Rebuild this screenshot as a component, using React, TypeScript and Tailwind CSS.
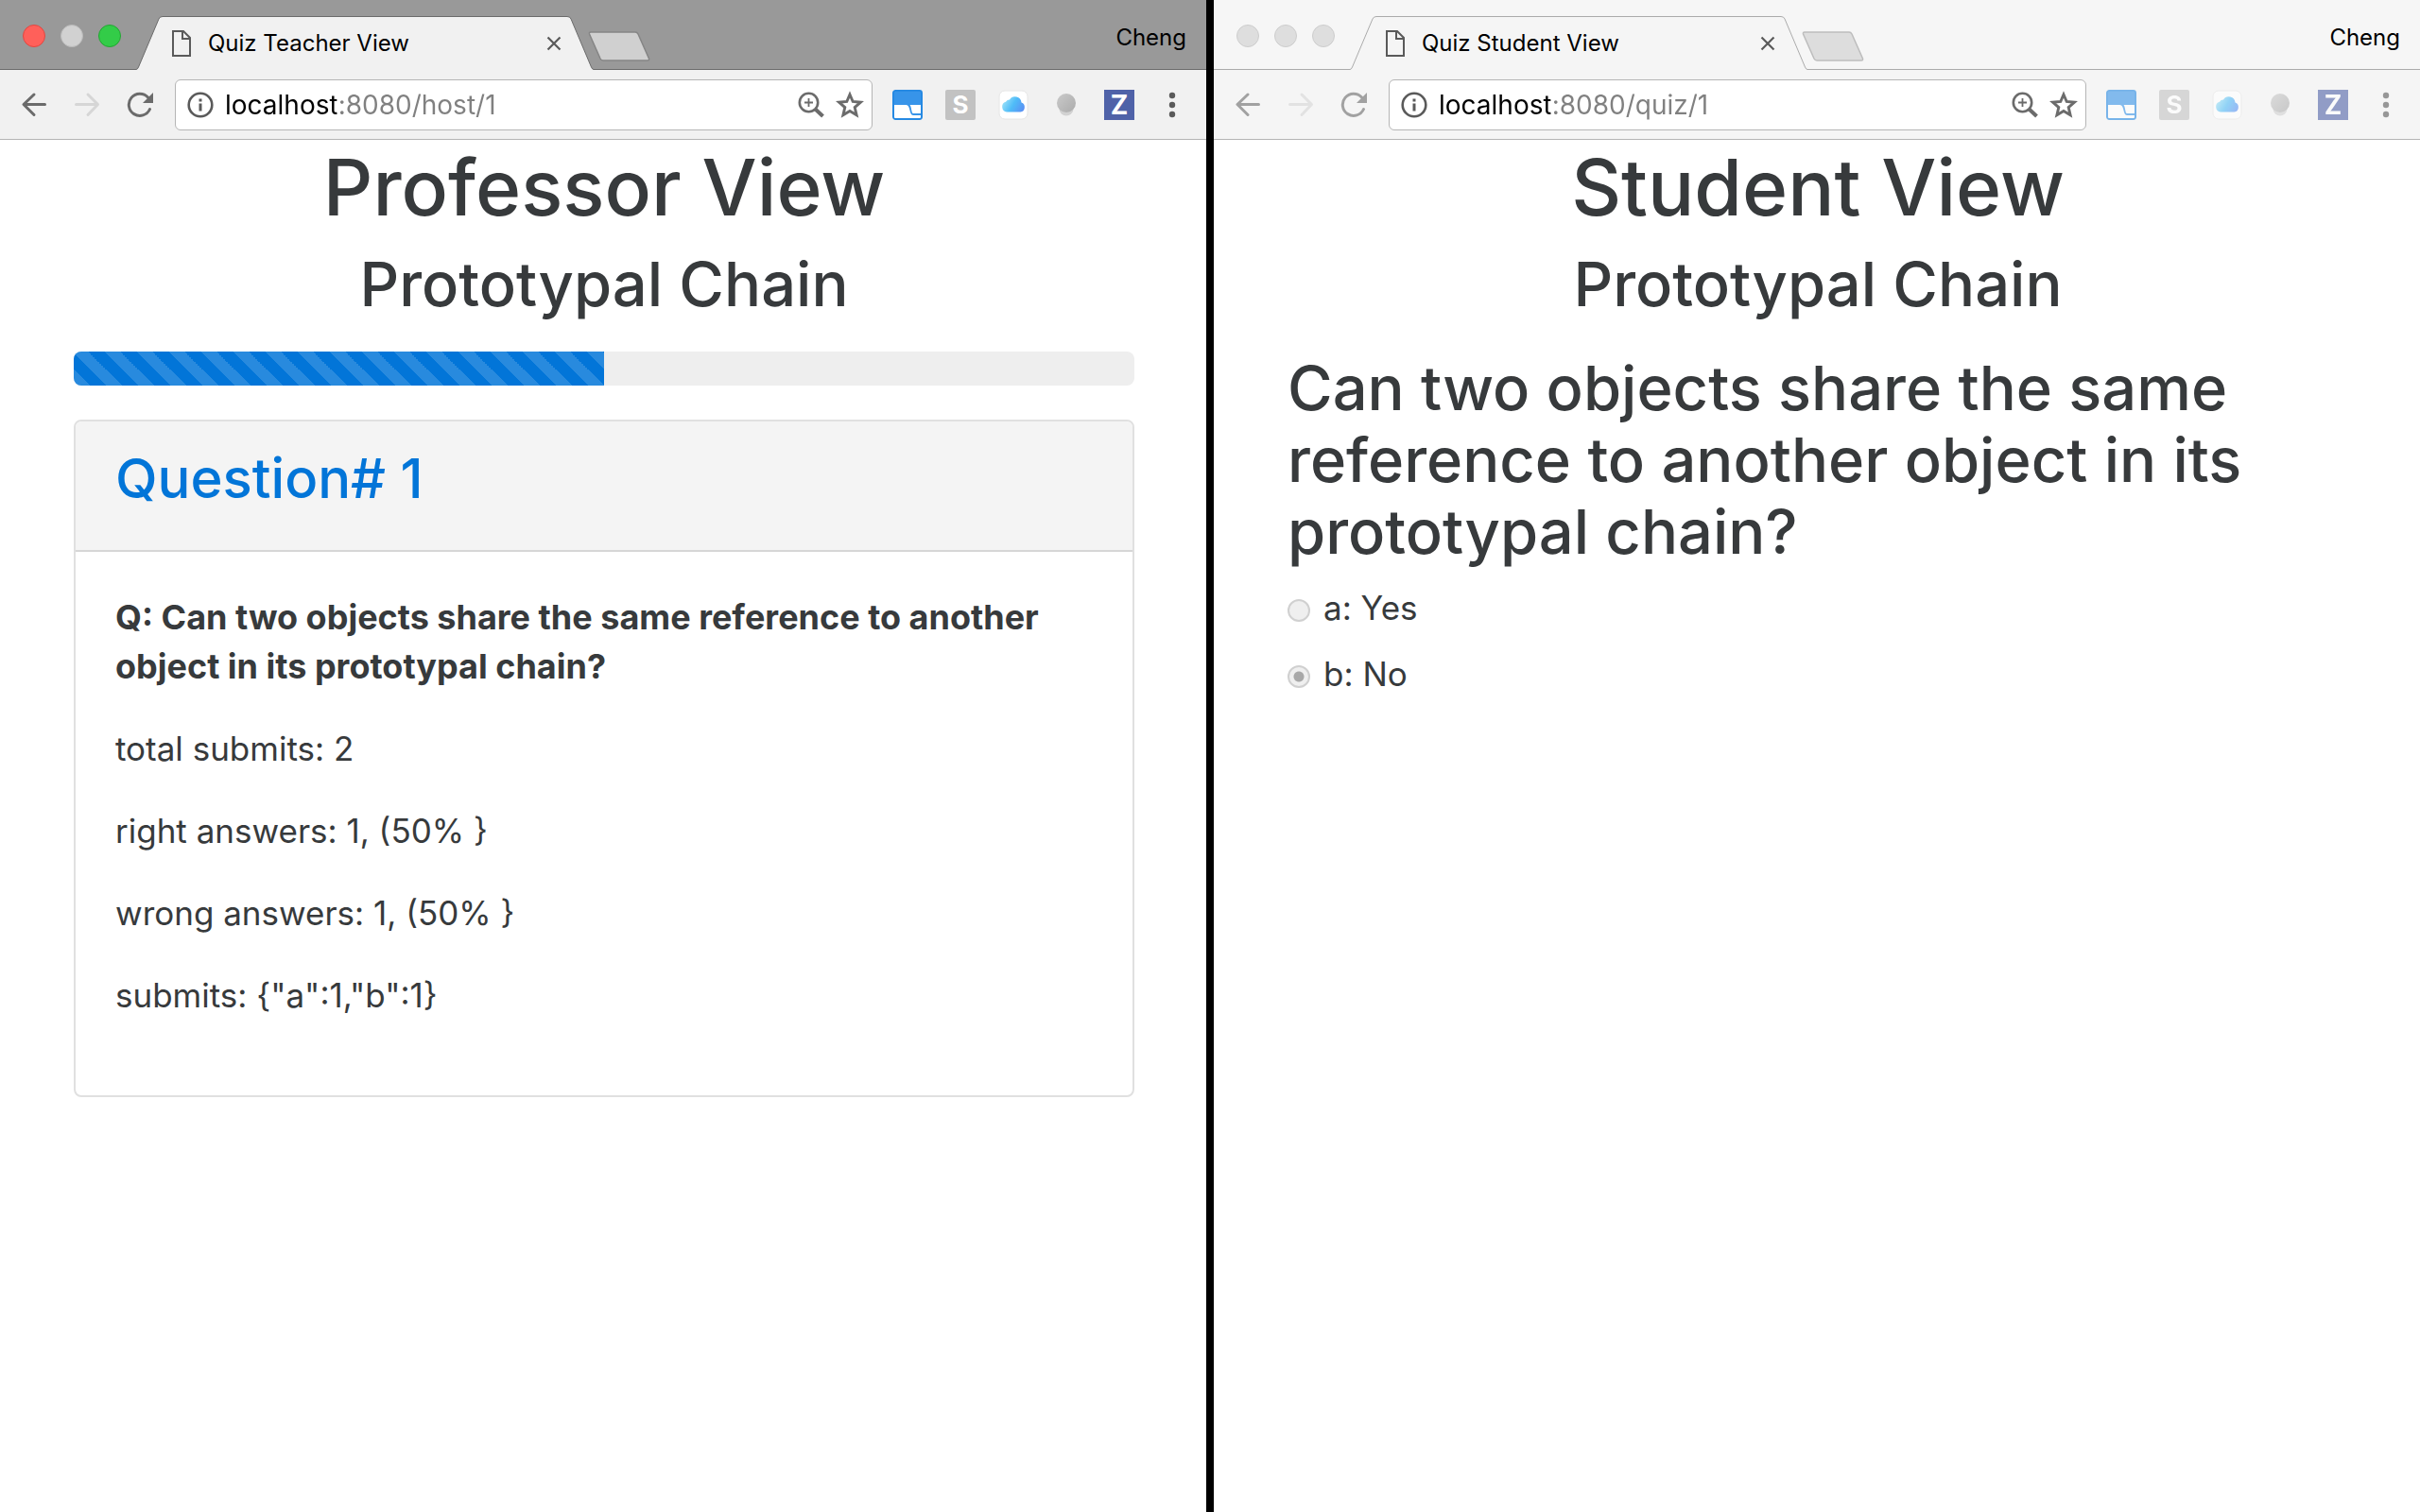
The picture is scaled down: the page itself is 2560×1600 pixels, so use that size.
import { ReactNode } from "react";

type Theme = {
  strip: string;
  toolbar: string;
  faded: string;
  tabFill: string;
  tabStroke: string;
  newTabFill: string;
  newTabStroke: string;
  lights: string[];
};

const activeTheme: Theme = {
  strip: "bg-[#999999] border-[#6b6b6b]",
  toolbar: "bg-[#f1f1f1]",
  faded: "opacity-100",
  tabFill: "#f1f1f1",
  tabStroke: "#6b6b6b",
  newTabFill: "#d0d0d0",
  newTabStroke: "#858585",
  lights: [
    "bg-[#ff605a] border-[#e14640]",
    "bg-[#d1d1d1] border-[#bababa]",
    "bg-[#33cc48] border-[#24a533]",
  ],
};

const inactiveTheme: Theme = {
  strip: "bg-[#f6f6f6] border-[#ababab]",
  toolbar: "bg-[#f5f5f5]",
  faded: "opacity-60",
  tabFill: "#f5f5f5",
  tabStroke: "#ababab",
  newTabFill: "#dddddd",
  newTabStroke: "#bdbdbd",
  lights: [
    "bg-[#dedede] border-[#cdcdcd]",
    "bg-[#dedede] border-[#cdcdcd]",
    "bg-[#dedede] border-[#cdcdcd]",
  ],
};

function DocumentIcon() {
  return (
    <svg className="size-7 shrink-0" viewBox="0 0 28 28" fill="none" stroke="#5a5a5a" strokeWidth="2" aria-hidden="true">
      <path d="M5 1H16L23 8V27H5Z" />
      <path d="M15 1V9H23" />
    </svg>
  );
}

function BackIcon() {
  return (
    <svg className="size-7" viewBox="0 0 28 28" fill="none" stroke="#6b6b6b" strokeWidth="3" strokeLinecap="round" strokeLinejoin="round" aria-hidden="true">
      <path d="M25.500 13.500H3.500M14 3L3 13.500L14 24.500" />
    </svg>
  );
}

function ForwardIcon() {
  return (
    <svg className="size-7" viewBox="0 0 28 28" fill="none" stroke="#d6d6d6" strokeWidth="3" strokeLinecap="round" strokeLinejoin="round" aria-hidden="true">
      <path d="M2.500 13.500H24.500M15 3L25.500 13.500L15 24.500" />
    </svg>
  );
}

function ReloadIcon() {
  return (
    <svg className="size-7" viewBox="0 0 28 28" aria-hidden="true">
      <path d="M24.500 18.500A11.600 11.600 0 1 1 22.500 6" fill="none" stroke="#6b6b6b" strokeWidth="3" strokeLinecap="round" />
      <path d="M28 1V12H17Z" fill="#6b6b6b" />
    </svg>
  );
}

function InfoIcon() {
  return (
    <svg className="size-7 shrink-0" viewBox="0 0 28 28" aria-hidden="true">
      <circle cx="14" cy="14" r="12.300" fill="none" stroke="#5a5a5a" strokeWidth="2.600" />
      <path d="M12.500 7.500H15.500V10.500H12.500ZM12.500 12.500H15.500V20.500H12.500Z" fill="#5a5a5a" />
    </svg>
  );
}

function ZoomInIcon() {
  return (
    <svg className="size-7" viewBox="0 0 28 28" fill="none" stroke="#6b6b6b" aria-hidden="true">
      <circle cx="11.500" cy="11.500" r="9.700" strokeWidth="2.600" />
      <path d="M11.500 7V16M7 11.500H16" strokeWidth="1.800" />
      <path d="M18.500 18.500L26.500 26" strokeWidth="4" />
    </svg>
  );
}

function StarIcon() {
  return (
    <svg className="h-8 w-[30px]" viewBox="0 0 30 32" fill="none" stroke="#6b6b6b" strokeWidth="2.900" aria-hidden="true">
      <path d="M15 5L18.200 12.500L26.500 13.200L20.200 18.600L22.100 26.800L15 22.400L7.900 26.800L9.800 18.600L3.500 13.200L11.800 12.500Z" />
    </svg>
  );
}

function TabCurveIcon() {
  return (
    <svg className="size-8" viewBox="0 0 32 32" aria-hidden="true">
      <rect x="0.900" y="0.900" width="30.200" height="30.200" rx="2.500" fill="#3794e9" stroke="#2488e2" strokeWidth="1.800" />
      <path d="M2 16H14.500C19.500 16 17.500 27 22 27H30V29Q30 30 29 30H3Q2 30 2 29Z" fill="#ffffff" />
      <path d="M18.500 16H30V25H22C20 25 20.500 18.500 18.500 16Z" fill="#ffffff" />
    </svg>
  );
}

function CloudIcon({ id }: { id: string }) {
  return (
    <svg className="size-8" viewBox="0 0 32 32" aria-hidden="true">
      <defs>
        <linearGradient id={id} x1="0" y1="0.300" x2="1" y2="0.700">
          <stop offset="0" stopColor="#9fe3f8" />
          <stop offset="0.500" stopColor="#4fbcf8" />
          <stop offset="1" stopColor="#5a92f4" />
        </linearGradient>
      </defs>
      <rect x="1" y="1" width="30" height="30" rx="6" fill="#ffffff" stroke="#e6e6e6" />
      <path d="M9 23.500A5.500 5.500 0 0 1 8 12.800A4.500 4.500 0 0 1 12 10.500A6.800 6.800 0 0 1 24.500 13.500A5.200 5.200 0 0 1 23.500 23.500Z" fill={`url(#${id})`} />
    </svg>
  );
}

function BulbIcon({ id }: { id: string }) {
  return (
    <svg className="size-8" viewBox="0 0 32 32" aria-hidden="true">
      <defs>
        <linearGradient id={id} x1="0" y1="0" x2="1" y2="1">
          <stop offset="0" stopColor="#cacaca" />
          <stop offset="1" stopColor="#ababab" />
        </linearGradient>
      </defs>
      <circle cx="16" cy="20" r="7.500" fill="#d2d2d2" />
      <circle cx="16" cy="14" r="10" fill={`url(#${id})`} />
    </svg>
  );
}

function MenuIcon() {
  return (
    <svg className="h-8 w-2" viewBox="0 0 8 32" fill="#5a5a5a" aria-hidden="true">
      <circle cx="4" cy="6" r="3.200" />
      <circle cx="4" cy="16" r="3.200" />
      <circle cx="4" cy="26" r="3.200" />
    </svg>
  );
}

function BrowserWindow({
  theme,
  name,
  title,
  path,
  children,
}: {
  theme: Theme;
  name: string;
  title: string;
  path: string;
  children: ReactNode;
}) {
  return (
    <section className="flex min-w-0 flex-1 flex-col bg-white">
      <header>
        <div className={`flex h-[74px] items-stretch border-b ${theme.strip}`}>
          <div className="flex items-center gap-4 pt-[3px] pl-6">
            {["Close", "Minimize", "Maximize"].map((label, i) => (
              <button key={label} aria-label={label} className={`size-6 rounded-full border ${theme.lights[i]}`} />
            ))}
          </div>
          <div className="relative z-10 -mb-px ml-4 flex h-[57px] w-[484px] shrink-0 items-center gap-3.5 self-end pr-[34px] pl-[34px]">
            <svg className="absolute inset-0 size-full" viewBox="0 0 484 57" aria-hidden="true">
              <path
                d="M0 56.500Q1.500 56.500 2.500 54L24 3Q25 0.500 28 0.500H456Q459 0.500 460 3L481.500 54Q482.500 56.500 484 56.500V57H0Z"
                fill={theme.tabFill}
              />
              <path
                d="M0 56.500Q1.500 56.500 2.500 54L24 3Q25 0.500 28 0.500H456Q459 0.500 460 3L481.500 54Q482.500 56.500 484 56.500"
                fill="none"
                stroke={theme.tabStroke}
              />
            </svg>
            <span className="relative flex">
              <DocumentIcon />
            </span>
            <span className="relative flex-1 truncate text-2xl text-black">{title}</span>
            <button aria-label="Close tab" className="relative">
              <svg className="size-4" viewBox="0 0 16 16" fill="none" stroke="#5a5a5a" strokeWidth="2.200" aria-hidden="true">
                <path d="M1.500 1.500L14.500 14.500M14.500 1.500L1.500 14.500" />
              </svg>
            </button>
          </div>
          <button aria-label="New tab" className="-ml-1.5 self-center pt-6">
            <svg className="h-8 w-[66px]" viewBox="0 0 66 32" aria-hidden="true">
              <path
                d="M3 1H50Q52 1 53 3L64.500 29Q65 31 63 31H16Q14 31 13 29L1.500 3Q1 1 3 1Z"
                fill={theme.newTabFill}
                stroke={theme.newTabStroke}
                strokeWidth="1.500"
              />
            </svg>
          </button>
          <button className="ml-auto self-center pt-1.5 pr-[21px] text-2xl text-black">Cheng</button>
        </div>
        <div className={`flex h-[74px] items-center border-b border-[#b5b5b5] pr-8 pl-[22px] ${theme.toolbar}`}>
          <nav className={`flex gap-7 ${theme.faded}`}>
            <button aria-label="Back">
              <BackIcon />
            </button>
            <button aria-label="Forward" disabled>
              <ForwardIcon />
            </button>
            <button aria-label="Reload">
              <ReloadIcon />
            </button>
          </nav>
          <div className="ml-[23px] flex h-[54px] min-w-0 flex-1 items-center rounded-md border border-[#b5b5b5] bg-white pr-2 pl-3">
            <InfoIcon />
            <input
              type="text"
              aria-label="Address"
              defaultValue={`localhost:8080${path}`}
              className="ml-3 min-w-0 flex-1 bg-[linear-gradient(to_right,#000000_118px,#808080_118px)] bg-clip-text text-[28px] leading-10 text-transparent outline-none"
            />
            <button aria-label="Zoom">
              <ZoomInIcon />
            </button>
            <button aria-label="Bookmark" className="ml-3">
              <StarIcon />
            </button>
          </div>
          <div className={`ml-[21px] flex items-center gap-6 ${theme.faded}`}>
            <button aria-label="Tab extension">
              <TabCurveIcon />
            </button>
            <button className="flex size-8 items-center justify-center rounded-xs bg-[#c2c2c2] text-[26px] leading-8 font-bold text-white">S</button>
            <button aria-label="Cloud extension">
              <CloudIcon id={`cloud-${name}`} />
            </button>
            <button aria-label="Lamp extension">
              <BulbIcon id={`bulb-${name}`} />
            </button>
            <button className="flex size-8 items-center justify-center bg-[#4f62a8] text-[28px] leading-8 font-bold text-white">Z</button>
          </div>
          <button aria-label="Menu" className={`ml-9 ${theme.faded}`}>
            <MenuIcon />
          </button>
        </div>
      </header>
      <main className="flex-1 pr-[76px] pl-[78px] text-[35px] leading-[52px] text-[#373a3c]">{children}</main>
    </section>
  );
}

function Titles({ view, topic }: { view: string; topic: string }) {
  return (
    <div className="text-center font-medium">
      <h1 className="text-[82px] leading-[102px]">{view}</h1>
      <h2 className="mt-3 text-[65px] leading-[77px]">{topic}</h2>
    </div>
  );
}

const stats = ["total submits: 2", "right answers: 1, (50% }", "wrong answers: 1, (50% }", 'submits: {"a":1,"b":1}'];

const choices = [
  { id: "a", text: "Yes", chosen: false },
  { id: "b", text: "No", chosen: true },
];

export default function App() {
  return (
    <div className="flex min-h-screen bg-black font-['Inter',sans-serif]">
      <BrowserWindow theme={activeTheme} name="host" title="Quiz Teacher View" path="/host/1">
        <Titles view="Professor View" topic="Prototypal Chain" />
        <div
          role="progressbar"
          aria-label="Quiz progress"
          aria-valuenow={50}
          aria-valuemin={0}
          aria-valuemax={100}
          className="mt-[33px] h-9 overflow-hidden rounded-lg bg-[#eeeeee]"
        >
          <div className="h-full w-1/2 bg-[#0275d8] bg-[linear-gradient(45deg,rgba(255,255,255,0.15)_25%,transparent_25%,transparent_50%,rgba(255,255,255,0.15)_50%,rgba(255,255,255,0.15)_75%,transparent_75%)] bg-[length:34px_34px] bg-[position:0_2px]" />
        </div>
        <article className="mt-9 overflow-hidden rounded-lg border-2 border-[#e0e0e0]">
          <div className="border-b-2 border-[#d6d6d6] bg-[#f4f4f4] px-[42px] pt-[26px] pb-[42px]">
            <h3 className="text-[58px] leading-[68px] font-medium text-[#0275d8]">Question# 1</h3>
          </div>
          <div className="flex flex-col gap-[35px] px-[42px] pt-[43px] pb-20">
            <p className="text-4xl leading-[52px] font-bold">
              Q: Can two objects share the same reference to another object in its prototypal chain?
            </p>
            {stats.map((line) => (
              <p key={line}>{line}</p>
            ))}
          </div>
        </article>
      </BrowserWindow>
      <div className="w-2 shrink-0 bg-black" />
      <BrowserWindow theme={inactiveTheme} name="quiz" title="Quiz Student View" path="/quiz/1">
        <Titles view="Student View" topic="Prototypal Chain" />
        <fieldset className="mt-[34px]">
          <legend className="text-[65px] leading-[76px] font-medium">
            Can two objects share the same reference to another object in its prototypal chain?
          </legend>
          <div className="flex flex-col items-start gap-[18px] pt-4">
            {choices.map((choice) => (
              <label key={choice.id} className="flex items-center gap-3.5">
                <input
                  type="radio"
                  name="answer"
                  disabled
                  defaultChecked={choice.chosen}
                  className="mt-1.5 size-6 appearance-none rounded-full border-2 border-[#d0d0d0] bg-[#efefef] checked:bg-[radial-gradient(circle,#a8a8a8_5px,#efefef_6px)]"
                />
                {choice.id}: {choice.text}
              </label>
            ))}
          </div>
        </fieldset>
      </BrowserWindow>
    </div>
  );
}
